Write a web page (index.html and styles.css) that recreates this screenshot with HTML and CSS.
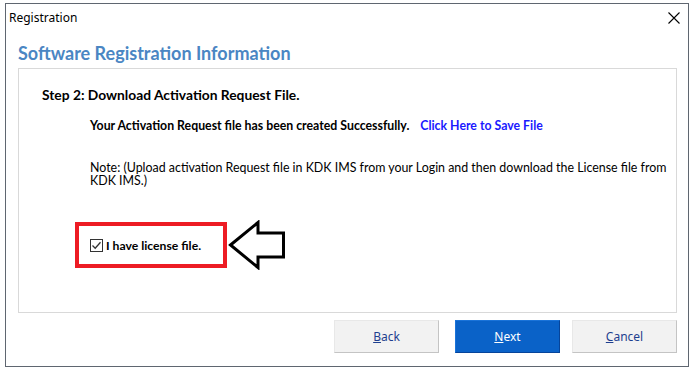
FILE: index.html
```html
<!DOCTYPE html>
<html lang="en">
<head>
    <meta charset="UTF-8">
    <title>Registration</title>
    <link rel="stylesheet" href="styles.css">
</head>
<body>

    <div class="window">
        <div class="titleBar">
            <span class="titleText">Registration</span>
            <span class="closeBtn">
                <svg width="12" height="12" viewBox="0 0 12 12">
                    <path d="M0.5 0.5 L11.5 11.5 M11.5 0.5 L0.5 11.5" stroke="#000" stroke-width="1.1" fill="none"/>
                </svg>
            </span>
        </div>

        <h1 class="heading">Software Registration Information</h1>

        <div class="panel">
            <div class="stepTitle">Step 2: Download Activation Request File.</div>
            <div class="stepBody">
                <div class="created">
                    Your Activation Request file has been created Successfully.
                    <a class="saveLink" href="#">Click Here to Save File</a>
                </div>
                <div class="note">Note: (Upload activation Request file in KDK IMS from your Login and then download the License file from KDK IMS.)</div>
            </div>

            <div class="licenseRow">
                <label class="licenseBox">
                    <span class="check">
                        <svg width="13" height="13" viewBox="0 0 13 13">
                            <rect x="0.5" y="0.5" width="12" height="12" fill="#fff" stroke="#333"/>
                            <path d="M2.5 6.5 L5.2 9.2 L10.5 3.2" stroke="#333" stroke-width="1.3" fill="none"/>
                        </svg>
                    </span>
                    I have license file.
                </label>
                <svg class="arrow" width="58" height="50" viewBox="0 0 58 50">
                    <path d="M2.5 25 L30 2.5 L30 13 L55.5 13 L55.5 37 L30 37 L30 47.5 Z" fill="#fff" stroke="#000" stroke-width="3" stroke-linejoin="miter"/>
                </svg>
            </div>
        </div>

        <div class="buttons">
            <button class="btn back"><u>B</u>ack</button>
            <button class="btn primary"><u>N</u>ext</button>
            <button class="btn"><u>C</u>ancel</button>
        </div>
    </div>

</body>
</html>
```

FILE: styles.css
```css
body {
    margin: 0;
    background-color: #fff;
    font-family: 'Lato', 'Open Sans', sans-serif;
}

.window {
    box-sizing: border-box;
    width: 684px;
    height: 364px;
    margin: 3px 0 0 5px;
    border: 1px solid #5f6670;
    background-color: #fff;
}

.titleBar {
    display: flex;
    justify-content: space-between;
    align-items: center;
    height: 26px;
    padding: 0 8px 0 3px;
}

.titleText {
    font-family: 'Noto Sans', sans-serif;
    font-size: 12px;
    color: #000;
}

.closeBtn {
    display: flex;
    margin-top: 1px;
}

.heading {
    margin: 8px 0 0 12px;
    font-size: 18px;
    font-weight: bold;
    color: #4a86c3;
    height: 30px;
    line-height: 30px;
}

.panel {
    box-sizing: border-box;
    width: 659px;
    height: 245px;
    margin-left: 12px;
    border: 1px solid #d9d9d9;
    padding: 17px 0 0 23px;
}

.stepTitle {
    font-size: 13.8px;
    font-weight: bold;
    color: #000;
}

.stepBody {
    padding: 15px 0 0 48px;
    font-size: 12.4px;
    color: #000;
}

.created {
    font-size: 12.3px;
    font-weight: bold;
}

.saveLink {
    margin-left: 8px;
    color: #1a1aff;
    text-decoration: none;
}

.note {
    margin-top: 28px;
    line-height: 13px;
    padding-right: 4px;
}

.licenseRow {
    display: flex;
    align-items: center;
    margin: 33px 0 0 33px;
}

.licenseBox {
    box-sizing: border-box;
    display: flex;
    align-items: center;
    width: 152px;
    height: 46px;
    border: 4px solid #ed1c24;
    padding-left: 11px;
    font-size: 12.2px;
    font-weight: bold;
}

.check {
    display: flex;
    margin-right: 3px;
}

.arrow {
    margin-left: 1px;
}

.buttons {
    display: flex;
    justify-content: flex-end;
    gap: 12px;
    width: 659px;
    margin: 7px 0 0 12px;
}

.btn {
    width: 105px;
    height: 33px;
    font-family: 'Noto Sans', sans-serif;
    font-size: 12px;
    color: #1e3f8f;
    background-color: #f2f2f2;
    border: 1px solid #c4c4c4;
    border-top-color: #e8e8e8;
    border-left-color: #e8e8e8;
}

.btn.back {
    margin-right: 4px;
}

.btn.primary {
    background-color: #0a62c8;
    color: #fff;
    border-color: #1a73d9;
    border-bottom-color: #06449a;
    border-right-color: #06449a;
}
```
